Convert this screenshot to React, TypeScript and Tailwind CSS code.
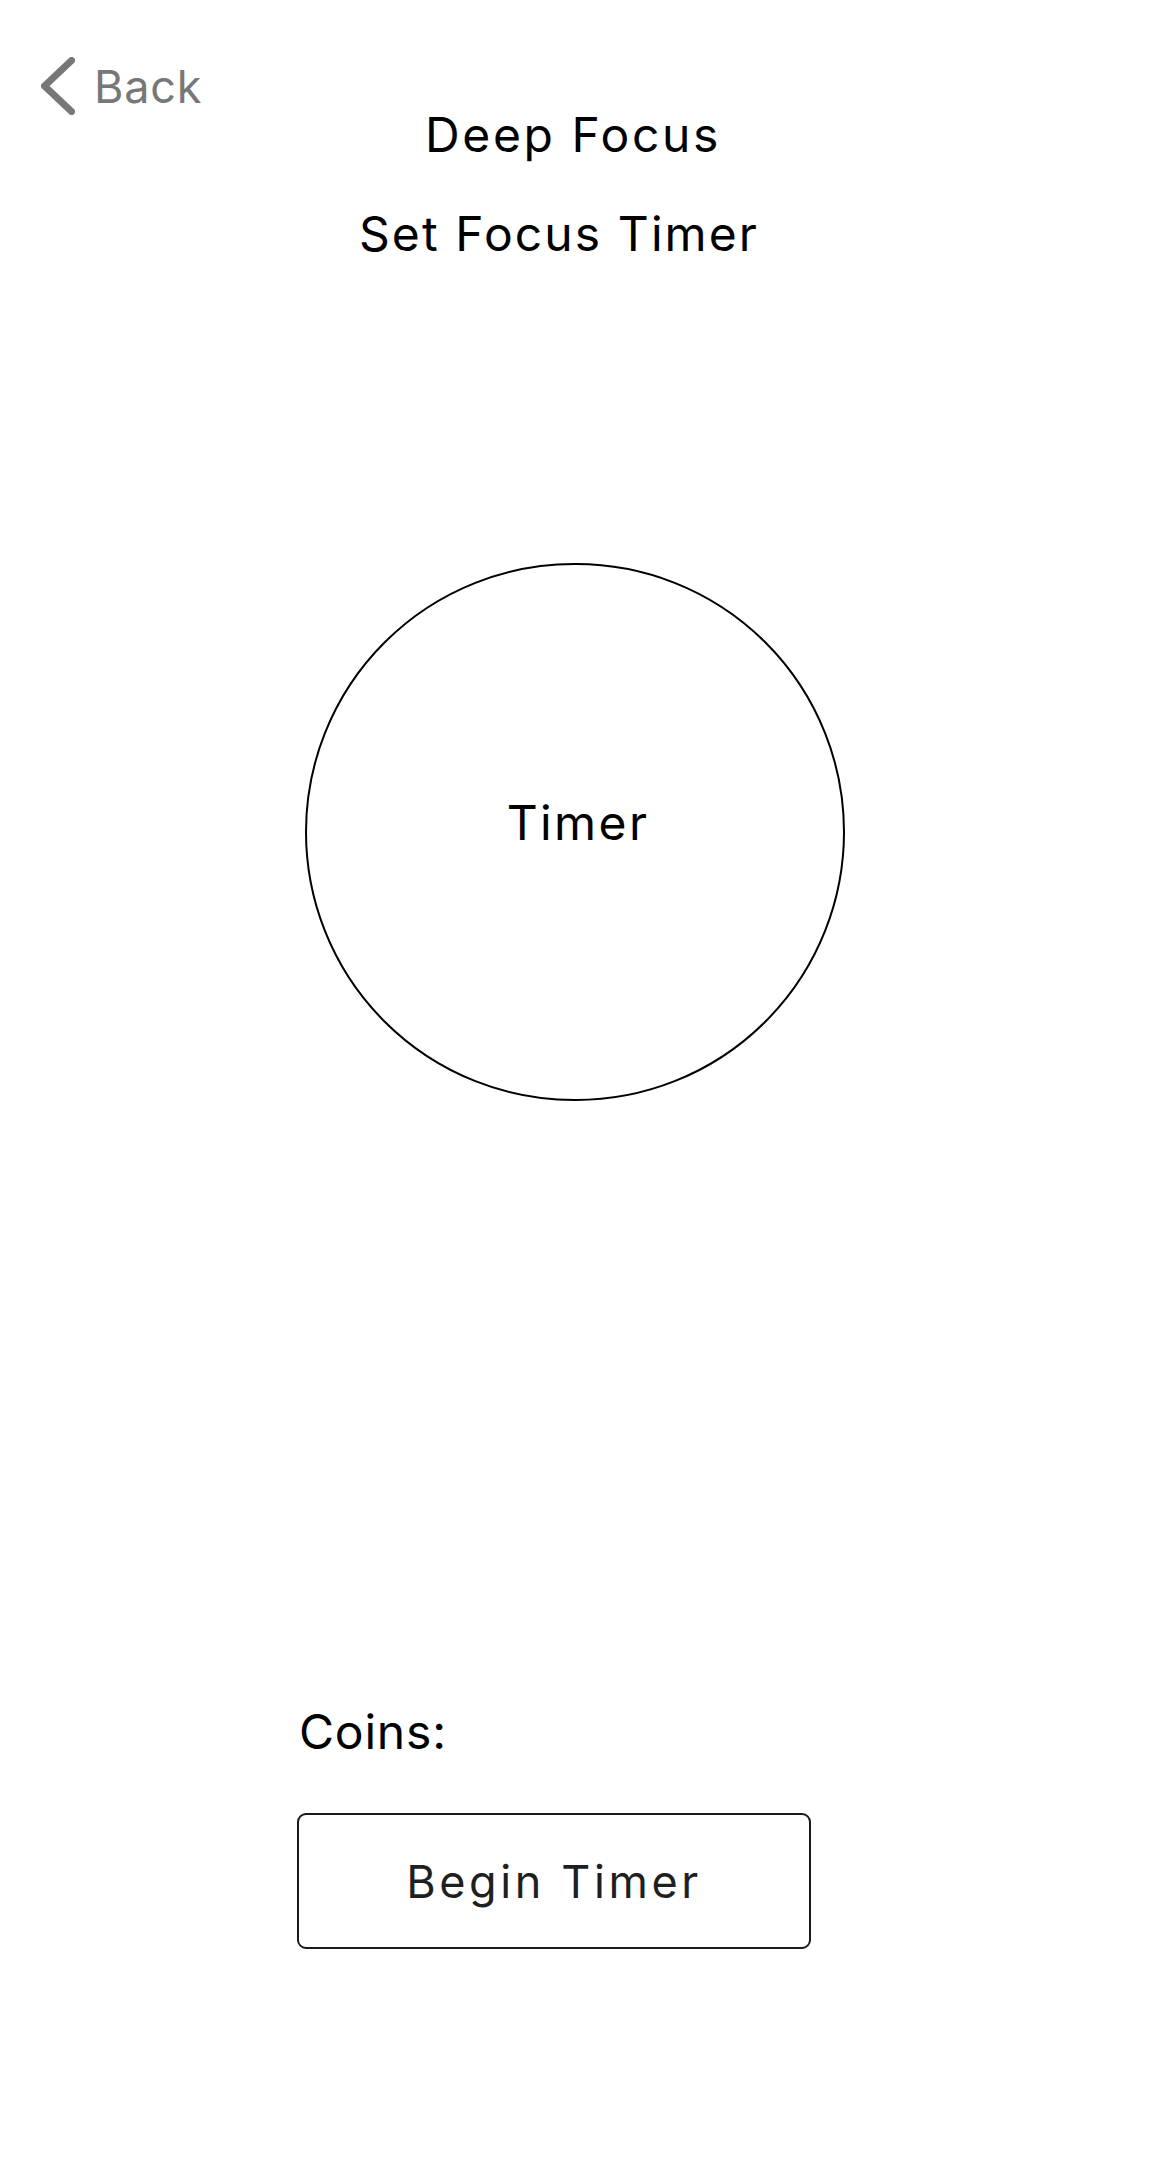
import React from 'react'

const font = { fontFamily: 'Inter, "DejaVu Sans", sans-serif' }

const ChevronLeft = () => (
  <svg width="34" height="58" viewBox="0 0 34 58" fill="none">
    <path d="M30.5 3.5 L3.5 29 L30.5 54.5" stroke="#777777" strokeWidth="7" strokeLinecap="round" strokeLinejoin="round" />
  </svg>
)

const FocusTimer = () => {
  return (
    <div className="w-[1150px] min-h-[2175px] bg-white text-black" style={font}>
      {/* Header */}
      <div className="pl-[41px] pt-[57px] flex items-center gap-[19px]">
        <ChevronLeft />
        <span className="text-[45px] leading-none tracking-[0.8px] text-[#777777]">Back</span>
      </div>
      <h1 className="-mt-1 pr-[4px] text-center text-[48px] leading-none tracking-[2.6px] font-normal">Deep Focus</h1>
      <h2 className="mt-[51px] pr-[32px] text-center text-[48px] leading-none tracking-[2.1px] font-normal">Set Focus Timer</h2>

      {/* Timer circle */}
      <div className="mt-[305px] mx-auto w-[540px] h-[538px] rounded-full border-2 border-black flex items-center justify-center pb-[18px] pl-[6px]">
        <span className="text-[48px] leading-none tracking-[2.4px]">Timer</span>
      </div>

      {/* Coins + button */}
      <div className="ml-[297px] w-[514px] flex flex-col">
        <p className="mt-[607px] pl-[2px] text-[48px] leading-none tracking-[0.8px]">Coins:</p>
        <button className="mt-[57px] h-[136px] w-full rounded-[9px] border-2 border-[#1a1a1a] text-[#1f1f1f] text-[45px] leading-none tracking-[3.6px] flex items-center justify-center">
          Begin Timer
        </button>
      </div>
    </div>
  )
}

export default function App() {
  return <FocusTimer />
}
